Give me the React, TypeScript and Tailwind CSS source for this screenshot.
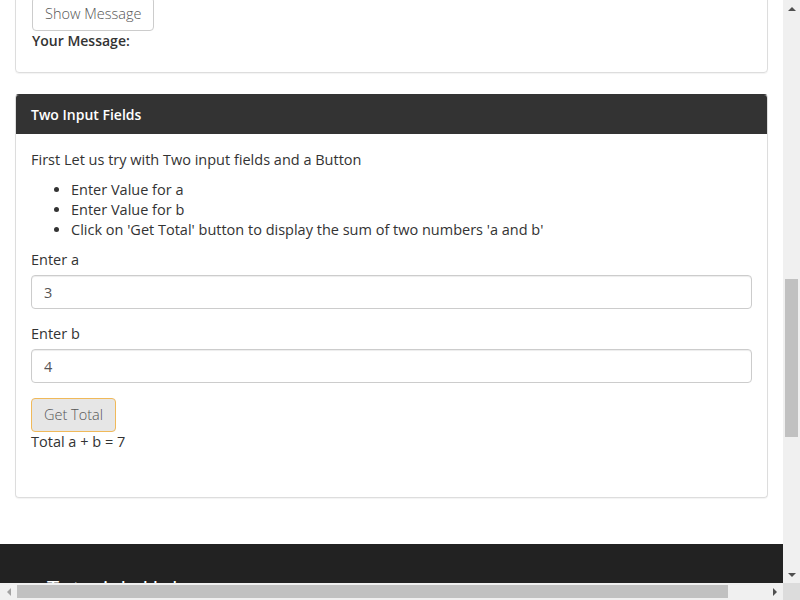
import React from "react";

const font = { fontFamily: "'Open Sans', 'Noto Sans', sans-serif" };

const App = () => {
  return (
    <div className="flex flex-col h-[600px] w-[800px] overflow-hidden bg-white" style={font}>
      <div className="flex flex-1 min-h-0">
        {/* page */}
        <div className="flex-1 min-w-0 overflow-hidden">
          <div className="px-[15px] text-[14.5px] leading-5 text-[#333] font-medium">
            <div className="mt-[-20px] border border-[#ddd] rounded px-4 pt-4 pb-[21px] shadow-[0_1px_1px_rgba(0,0,0,0.05)]">
              <button className="h-[34px] px-3 border border-[#ccc] rounded bg-white text-[#555] font-light">
                Show Message
              </button>
              <div className="font-semibold text-[14px]">Your Message:</div>
            </div>

            <div className="mt-[21px] border border-[#ddd] border-t-[#333] rounded shadow-[0_1px_1px_rgba(0,0,0,0.05)]">
              <div className="bg-[#333] text-white text-[14px] font-semibold px-[15px] h-[39px] flex items-center rounded-t-[3px]">
                Two Input Fields
              </div>
              <div className="px-[15px] pt-[16px] pb-[45px]">
                <p>First Let us try with Two input fields and a Button</p>
                <ul className="list-disc pl-10 mt-[10px]">
                  <li>Enter Value for a</li>
                  <li>Enter Value for b</li>
                  <li>Click on 'Get Total' button to display the sum of two numbers 'a and b'</li>
                </ul>
                <label className="block mt-[10px] mb-[5px]">Enter a</label>
                <input
                  readOnly
                  value="3"
                  className="block w-full h-[34px] px-3 border border-[#ccc] rounded text-[#555] shadow-[inset_0_1px_1px_rgba(0,0,0,0.075)] outline-none"
                />
                <label className="block mt-[15px] mb-[5px]">Enter b</label>
                <input
                  readOnly
                  value="4"
                  className="block w-full h-[34px] px-3 border border-[#ccc] rounded text-[#555] shadow-[inset_0_1px_1px_rgba(0,0,0,0.075)] outline-none"
                />
                <button className="mt-[15px] h-[34px] px-3 border border-[#f0b95a] rounded bg-[#e6e6e6] text-[#555] font-light">
                  Get Total
                </button>
                <div>Total a + b = 7</div>
              </div>
            </div>
          </div>

          <div className="mt-[46px] bg-[#222] h-[80px] pt-[30px] px-[47px]">
            <div className="text-white text-[22px] leading-7 font-medium">Tutorials Hub</div>
          </div>
        </div>

        {/* vertical scrollbar */}
        <div className="w-[17px] bg-[#f0f0f0] flex flex-col items-center">
          <div className="h-[17px] flex items-center justify-center">
            <div className="w-0 h-0 border-l-4 border-r-4 border-b-4 border-l-transparent border-r-transparent border-b-[#505050]" />
          </div>
          <div className="flex-1 w-full px-[2px]">
            <div className="mt-[262px] h-[158px] bg-[#c1c1c1]" />
          </div>
          <div className="h-[17px] flex items-center justify-center">
            <div className="w-0 h-0 border-l-4 border-r-4 border-t-4 border-l-transparent border-r-transparent border-t-[#505050]" />
          </div>
        </div>
      </div>

      {/* horizontal scrollbar */}
      <div className="h-[17px] flex">
        <div className="w-[783px] bg-[#f0f0f0] flex items-center">
          <div className="w-[17px] flex items-center justify-center">
            <div className="w-0 h-0 border-t-4 border-b-4 border-r-4 border-t-transparent border-b-transparent border-r-[#a3a3a3]" />
          </div>
          <div className="flex-1 py-[2px] h-full">
            <div className="w-[711px] h-full bg-[#c1c1c1]" />
          </div>
          <div className="w-[17px] flex items-center justify-center">
            <div className="w-0 h-0 border-t-4 border-b-4 border-l-4 border-t-transparent border-b-transparent border-l-[#505050]" />
          </div>
        </div>
        <div className="w-[17px] bg-[#dcdcdc]" />
      </div>
    </div>
  );
};

export default App;
